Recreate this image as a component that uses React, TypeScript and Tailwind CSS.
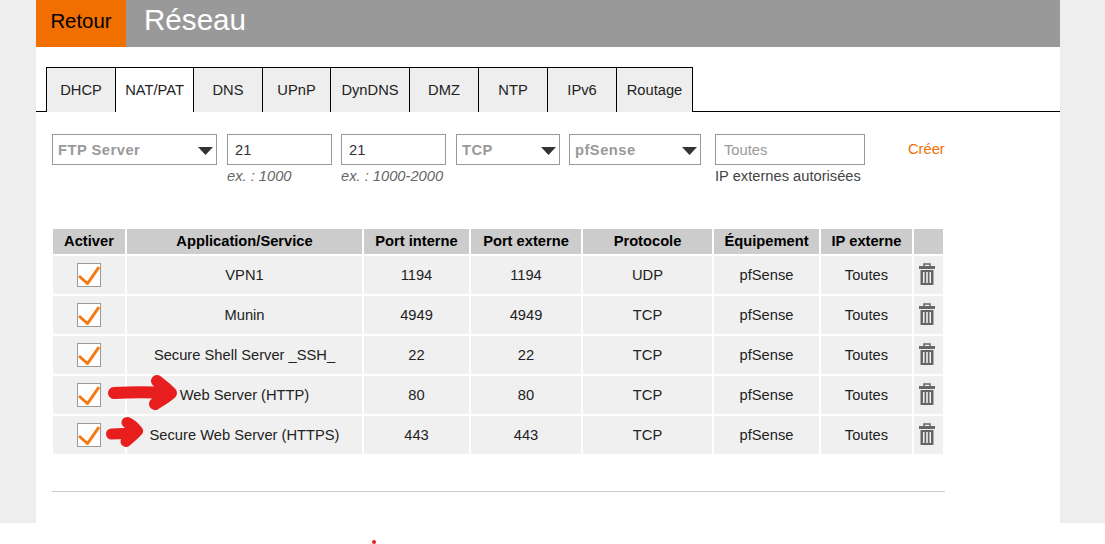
const tabs = [
  { label: "DHCP", width: "w-[69px]" },
  { label: "NAT/PAT", width: "w-[78px]", active: true },
  { label: "DNS", width: "w-[69px]" },
  { label: "UPnP", width: "w-[68px]" },
  { label: "DynDNS", width: "w-[79px]" },
  { label: "DMZ", width: "w-[69px]" },
  { label: "NTP", width: "w-[69px]" },
  { label: "IPv6", width: "w-[69px]" },
  { label: "Routage", width: "w-[77px]" },
];

const columns = [
  { label: "Activer", width: "w-[72px]" },
  { label: "Application/Service", width: "w-[235px]" },
  { label: "Port interne", width: "w-[105px]" },
  { label: "Port externe", width: "w-[110px]" },
  { label: "Protocole", width: "w-[129px]" },
  { label: "Équipement", width: "w-[105px]" },
  { label: "IP externe", width: "w-[91px]" },
  { label: "", width: "w-[29px]" },
];

const rows = [
  { name: "VPN1", internal: "1194", external: "1194", protocol: "UDP" },
  { name: "Munin", internal: "4949", external: "4949", protocol: "TCP" },
  { name: "Secure Shell Server _SSH_", internal: "22", external: "22", protocol: "TCP" },
  { name: "Web Server (HTTP)", internal: "80", external: "80", protocol: "TCP" },
  { name: "Secure Web Server (HTTPS)", internal: "443", external: "443", protocol: "TCP" },
];

function FakeSelect({ label, width }: { label: string; width: string }) {
  return (
    <div className={`${width} h-[31px] shrink-0 border border-[#999] flex items-center justify-between pl-[5px] pr-[1px] pt-[2px] text-[14.7px] font-bold tracking-[0.5px] text-[#999]`}>
      <span>{label}</span>
      <svg width="18" height="8" viewBox="0 0 18 8" className="mt-[1px]">
        <path d="M1 0H16L8.5 8Z" fill="#333" />
      </svg>
    </div>
  );
}

function Field({ value, hint }: { value: string; hint: string }) {
  return (
    <div className="w-[105px] shrink-0">
      <div className="h-[31px] border border-[#999] flex items-center pl-[7px] pt-[2px] text-[#333]">{value}</div>
      <div className="mt-[2px] italic leading-[18px] text-[#666]">{hint}</div>
    </div>
  );
}

function Tick() {
  return (
    <div className="w-6 h-6 mx-auto border border-[#999] bg-white flex items-center justify-center">
      <svg width="22" height="20" viewBox="0 0 22 20">
        <path d="M1 11L9.5 18.5L21 2" fill="none" stroke="#f47a12" strokeWidth="3" />
      </svg>
    </div>
  );
}

function Trash() {
  return (
    <svg width="16" height="22" viewBox="0 0 16 22" className="block ml-[5px] -mt-[2px]">
      <path d="M5 3V1H11V3" fill="none" stroke="#666" strokeWidth="1.5" />
      <rect x="0" y="3" width="16" height="3" fill="#666" />
      <path d="M1.5 7H14.5V22H1.5ZM4 9V20H5.5V9ZM7.2 9V20H8.8V9ZM10.5 9V20H12V9Z" fill="#666" fillRule="evenodd" />
    </svg>
  );
}

export default function App() {
  return (
    <div className="relative h-[544px] overflow-hidden bg-white font-['Liberation_Sans',Arial,sans-serif] text-[14.7px] text-[#222]">
      <div className="h-[523px] bg-[#eeeeee] px-[36px] w-[1105px] pr-[45px]">
        <main className="h-full bg-white">
          {/* title bar */}
          <header className="h-[47px] bg-[#999999] flex">
            <a className="w-[90px] bg-[#f16e00] text-black text-[20.4px] flex items-center justify-center pb-[5px]">Retour</a>
            <h1 className="ml-[18px] text-[29.6px] leading-[40px] text-white">Réseau</h1>
          </header>

          {/* tab strip */}
          <nav className="mt-[20px] h-[45px] border-b border-black pl-[10px] flex">
            {tabs.map((tab, i) => (
              <div
                key={tab.label}
                className={`${tab.width} h-[45px] shrink-0 border-t border-l border-black flex items-center justify-center ${i === tabs.length - 1 ? "border-r" : ""} ${tab.active ? "bg-white" : "bg-[#eeeeee]"}`}
              >
                {tab.label}
              </div>
            ))}
          </nav>

          {/* new rule form */}
          <form className="mt-[22px] ml-[16px] flex items-start">
            <FakeSelect label="FTP Server" width="w-[165px]" />
            <div className="ml-[10px]"><Field value="21" hint="ex. : 1000" /></div>
            <div className="ml-[9px]"><Field value="21" hint="ex. : 1000-2000" /></div>
            <div className="ml-[10px]"><FakeSelect label="TCP" width="w-[104px]" /></div>
            <div className="ml-[9px]"><FakeSelect label="pfSense" width="w-[132px]" /></div>
            <div className="ml-[14px] w-[150px] shrink-0">
              <div className="h-[31px] border border-[#999] flex items-center pl-[8px] pt-[2px] text-[#999]">Toutes</div>
              <div className="mt-[2px] leading-[18px] text-[#444] whitespace-nowrap">IP externes autorisées</div>
            </div>
            <span className="ml-[43px] mt-[4px] text-[#f16e00]">Créer</span>
          </form>

          {/* rules table */}
          <div className="relative mt-[42px] ml-[15px] w-[894px]">
            <table className="table-fixed border-separate border-spacing-[2px] w-[894px] text-center">
              <thead>
                <tr>
                  {columns.map((col) => (
                    <th key={col.label} className={`${col.width} h-[25px] p-0 bg-[#cccccc] font-bold text-black`}>{col.label}</th>
                  ))}
                </tr>
              </thead>
              <tbody>
                {rows.map((row) => (
                  <tr key={row.name}>
                    <td className="h-[38px] p-0 bg-[#f0f0f0]"><Tick /></td>
                    <td className="h-[38px] p-0 bg-[#f0f0f0]">{row.name}</td>
                    <td className="h-[38px] p-0 bg-[#f0f0f0]">{row.internal}</td>
                    <td className="h-[38px] p-0 bg-[#f0f0f0]">{row.external}</td>
                    <td className="h-[38px] p-0 bg-[#f0f0f0]">{row.protocol}</td>
                    <td className="h-[38px] p-0 bg-[#f0f0f0]">pfSense</td>
                    <td className="h-[38px] p-0 bg-[#f0f0f0]">Toutes</td>
                    <td className="h-[38px] p-0 bg-[#f0f0f0]"><Trash /></td>
                  </tr>
                ))}
              </tbody>
            </table>

            {/* hand-drawn red arrows on top of the last two rows */}
            <svg className="absolute left-[50px] top-[145px]" width="90" height="80" viewBox="0 0 90 80">
              <path d="M13 21C30 20 50 20 70 21M56 9C60 12 66 17 70 21C66 25 59 29 54 32" fill="none" stroke="#e81e1e" strokeWidth="12" strokeLinecap="round" strokeLinejoin="round" />
              <path d="M10.5 62C20 62 28 61 36.5 59M26 50.5C30 52 34 56 36.5 59C33 63 28 67 25 69.5" fill="none" stroke="#e81e1e" strokeWidth="11" strokeLinecap="round" strokeLinejoin="round" />
            </svg>
          </div>

          <hr className="mt-[35px] ml-[16px] w-[893px] border-t border-[#cccccc]" />
        </main>
      </div>
      {/* stray red dot */}
      <div className="absolute left-[372px] top-[540px] w-1 h-1 rounded-full bg-[#ee1c25]" />
    </div>
  );
}
